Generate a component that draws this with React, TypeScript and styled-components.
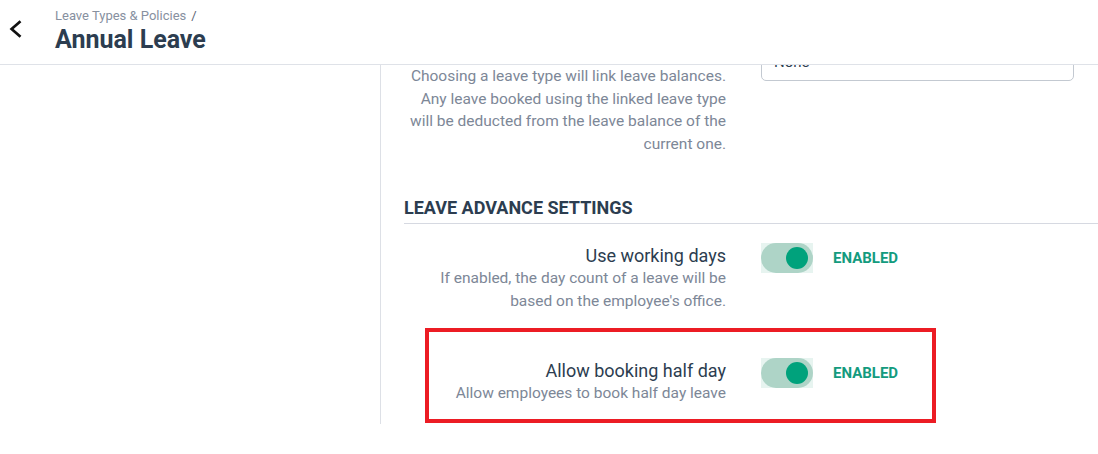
import React from "react";
import styled, { createGlobalStyle } from "styled-components";

const GlobalStyle = createGlobalStyle`
  html, body {
    margin: 0;
    padding: 0;
    background: #ffffff;
    font-family: Roboto, "Noto Sans", Arial, sans-serif;
  }
  * { box-sizing: border-box; }
`;

const Page = styled.div`
  width: 1098px;
  height: 454px;
  display: flex;
  flex-direction: column;
  overflow: hidden;
`;

const Header = styled.header`
  height: 65px;
  flex-shrink: 0;
  display: flex;
  align-items: center;
  border-bottom: 1px solid #dfe2e8;
  background: #fff;
  position: relative;
  z-index: 1;
`;

const BackButton = styled.button`
  width: 55px;
  height: 64px;
  padding: 0 0 0 9px;
  display: flex;
  align-items: center;
  border: none;
  background: none;
  cursor: pointer;
  svg {
    margin-top: -6px;
  }
`;

const TitleBlock = styled.div`
  display: flex;
  flex-direction: column;
  margin-top: -3px;
`;

const Breadcrumb = styled.div`
  font-size: 13px;
  line-height: 18px;
  color: #8790a0;
  span {
    margin-left: 5px;
    color: #5c6573;
  }
`;

const Title = styled.h1`
  margin: 0;
  font-size: 25px;
  line-height: 29px;
  font-weight: 700;
  color: #2c3d50;
`;

const Body = styled.div`
  display: flex;
  height: 359px;
`;

const Sidebar = styled.aside`
  width: 381px;
  flex-shrink: 0;
  border-right: 1px solid #dde0e6;
`;

const Main = styled.main`
  flex: 1;
  overflow: hidden;
  padding-left: 23px;
`;

const Scroller = styled.div`
  margin-top: -22px;
`;

const FieldRow = styled.div<{ $labelWidth: number }>`
  display: grid;
  grid-template-columns: ${(p) => p.$labelWidth}px 313px auto;
  column-gap: 35px;
  align-items: start;
`;

const LabelCol = styled.div`
  text-align: right;
`;

const FieldTitle = styled.div`
  font-size: 18px;
  line-height: 22px;
  color: #2c3d50;
`;

const HiddenTitle = styled(FieldTitle)`
  visibility: hidden;
`;

const FieldHelp = styled.div`
  font-size: 15.5px;
  line-height: 22.6px;
  color: #7d8797;
`;

const Select = styled.div`
  height: 38px;
  border: 1px solid #c3c9d1;
  border-radius: 5px;
  padding: 0 12px;
  display: flex;
  align-items: center;
  justify-content: space-between;
  font-size: 15px;
  color: #2c3d50;
`;

const SectionHeading = styled.h2`
  margin: 42px 0 0;
  padding-bottom: 4px;
  border-bottom: 1px solid #d6d9e1;
  font-size: 18px;
  line-height: 22px;
  font-weight: 700;
  color: #2c3d50;
`;

const SettingsList = styled.div`
  padding-top: 21px;
  display: flex;
  flex-direction: column;
  gap: 15px;
`;

const Highlight = styled.div`
  margin-left: 21px;
  width: 511px;
  border: 4px solid #ec1c24;
  padding: 28px 0 15px;
`;

const ToggleCell = styled.div`
  display: flex;
  align-items: center;
  gap: 20px;
  margin-top: -2px;
`;

const Toggle = styled.div`
  width: 52px;
  height: 30px;
  background: #e7f4f0;
  display: flex;
  align-items: center;
`;

const Track = styled.div<{ $on: boolean }>`
  width: 52px;
  height: 30px;
  border-radius: 15px;
  background: ${(p) => (p.$on ? "#aed4c7" : "#d5d9df")};
  display: flex;
  align-items: center;
  justify-content: ${(p) => (p.$on ? "flex-end" : "flex-start")};
  padding: 0 5px;
`;

const Knob = styled.div`
  width: 22px;
  height: 22px;
  border-radius: 50%;
  background: #00a27c;
`;

const Status = styled.span`
  font-size: 15px;
  font-weight: 700;
  color: #139b7e;
`;

const Switch = ({ on }: { on: boolean }) => (
  <ToggleCell>
    <Toggle>
      <Track $on={on}>
        <Knob />
      </Track>
    </Toggle>
    <Status>{on ? "ENABLED" : "DISABLED"}</Status>
  </ToggleCell>
);

export default function App() {
  return (
    <>
      <GlobalStyle />
      <Page>
        <Header>
          <BackButton aria-label="Back">
            <svg width="13" height="18" viewBox="0 0 13 18">
              <path
                d="M11.5 1.2 L2.6 9 L11.5 16.8"
                fill="none"
                stroke="#111"
                strokeWidth="2.7"
              />
            </svg>
          </BackButton>
          <TitleBlock>
            <Breadcrumb>
              Leave Types &amp; Policies<span>/</span>
            </Breadcrumb>
            <Title>Annual Leave</Title>
          </TitleBlock>
        </Header>
        <Body>
          <Sidebar />
          <Main>
            <Scroller>
              <FieldRow $labelWidth={322}>
                <LabelCol>
                  <HiddenTitle aria-hidden>Linked leave type</HiddenTitle>
                  <FieldHelp>
                    Choosing a leave type will link leave balances.
                    <br />
                    Any leave booked using the linked leave type
                    <br />
                    will be deducted from the leave balance of the
                    <br />
                    current one.
                  </FieldHelp>
                </LabelCol>
                <Select>
                  None
                  <svg width="10" height="6" viewBox="0 0 10 6">
                    <path d="M1 1l4 4 4-4" fill="none" stroke="#8790a0" strokeWidth="1.5" />
                  </svg>
                </Select>
              </FieldRow>

              <SectionHeading>LEAVE ADVANCE SETTINGS</SectionHeading>

              <SettingsList>
                <FieldRow $labelWidth={322}>
                  <LabelCol>
                    <FieldTitle>Use working days</FieldTitle>
                    <FieldHelp>
                      If enabled, the day count of a leave will be
                      <br />
                      based on the employee's office.
                    </FieldHelp>
                  </LabelCol>
                  <Switch on />
                </FieldRow>

                <Highlight>
                  <FieldRow $labelWidth={297}>
                    <LabelCol>
                      <FieldTitle>Allow booking half day</FieldTitle>
                      <FieldHelp>Allow employees to book half day leave</FieldHelp>
                    </LabelCol>
                    <Switch on />
                  </FieldRow>
                </Highlight>
              </SettingsList>
            </Scroller>
          </Main>
        </Body>
      </Page>
    </>
  );
}
